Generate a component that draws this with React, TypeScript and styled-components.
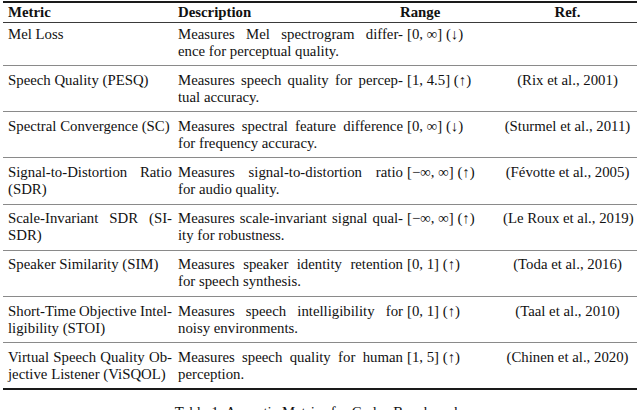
import React from "react";
import styled, { createGlobalStyle } from "styled-components";

const Global = createGlobalStyle`
  html, body { margin: 0; padding: 0; background: #ffffff; }
  body { font-family: "Liberation Serif", "Times New Roman", serif; color: #111111; }
`;

const Page = styled.div`
  width: 640px;
  height: 410px;
  overflow: hidden;
  padding-top: 1px;
  box-sizing: border-box;
`;

const Table = styled.div`
  margin: 0 3px;
  width: 634px;
  border-top: 2px solid #1a1a1a;
  border-bottom: 2px solid #1a1a1a;
  font-size: 14.8px;
  line-height: 17px;
`;

const HeaderRow = styled.div`
  display: grid;
  grid-template-columns: 170px 229px 96px 1fr;
  padding: 1px 5px;
  border-bottom: 1px solid #3a3a3a;
  font-weight: 700;
`;

const Row = styled.div<{ $first?: boolean; $last?: boolean }>`
  display: grid;
  grid-template-columns: 170px 229px 96px 1fr;
  padding: ${(p) => (p.$first ? "2.5px" : "5.6px")} 5px 5.6px 5px;
  border-bottom: ${(p) => (p.$last ? "none" : "1px solid #8a8a8a")};
`;

const Cell = styled.div<{ $pr?: number; $center?: boolean }>`
  padding-right: ${(p) => p.$pr ?? 0}px;
  text-align: ${(p) => (p.$center ? "center" : "left")};
  white-space: nowrap;
  min-width: 0;
`;

const JustLine = styled.div`
  display: flex;
  justify-content: space-between;
  column-gap: 2.5px;
  white-space: nowrap;
`;

const PlainLine = styled.div`
  white-space: nowrap;
`;

const RangeHead = styled.div`
  margin-left: -7px;
`;

const Caption = styled.div`
  margin-top: 14px;
  text-align: center;
  font-size: 14.8px;
  line-height: 17px;
`;

type RowData = {
  metric: string[];
  desc: string[];
  range: string;
  ref: string;
};

const rows: RowData[] = [
  {
    metric: ["Mel Loss"],
    desc: ["Measures Mel spectrogram differ-", "ence for perceptual quality."],
    range: "[0, ∞] (↓)",
    ref: "",
  },
  {
    metric: ["Speech Quality (PESQ)"],
    desc: ["Measures speech quality for percep-", "tual accuracy."],
    range: "[1, 4.5] (↑)",
    ref: "(Rix et al., 2001)",
  },
  {
    metric: ["Spectral Convergence (SC)"],
    desc: ["Measures spectral feature difference", "for frequency accuracy."],
    range: "[0, ∞] (↓)",
    ref: "(Sturmel et al., 2011)",
  },
  {
    metric: ["Signal-to-Distortion Ratio", "(SDR)"],
    desc: ["Measures signal-to-distortion ratio", "for audio quality."],
    range: "[−∞, ∞] (↑)",
    ref: "(Févotte et al., 2005)",
  },
  {
    metric: ["Scale-Invariant SDR (SI-", "SDR)"],
    desc: ["Measures scale-invariant signal qual-", "ity for robustness."],
    range: "[−∞, ∞] (↑)",
    ref: "(Le Roux et al., 2019)",
  },
  {
    metric: ["Speaker Similarity (SIM)"],
    desc: ["Measures speaker identity retention", "for speech synthesis."],
    range: "[0, 1] (↑)",
    ref: "(Toda et al., 2016)",
  },
  {
    metric: ["Short-Time Objective Intel-", "ligibility (STOI)"],
    desc: ["Measures speech intelligibility for", "noisy environments."],
    range: "[0, 1] (↑)",
    ref: "(Taal et al., 2010)",
  },
  {
    metric: ["Virtual Speech Quality Ob-", "jective Listener (ViSQOL)"],
    desc: ["Measures speech quality for human", "perception."],
    range: "[1, 5] (↑)",
    ref: "(Chinen et al., 2020)",
  },
];

const Lines: React.FC<{ lines: string[] }> = ({ lines }) => (
  <>
    {lines.map((l, i) =>
      i < lines.length - 1 ? (
        <JustLine key={i}>
          {l.split(" ").map((w, j) => (
            <span key={j}>{w}</span>
          ))}
        </JustLine>
      ) : (
        <PlainLine key={i}>{l}</PlainLine>
      )
    )}
  </>
);

export default function App() {
  return (
    <Page>
      <Global />
      <Table>
        <HeaderRow>
          <Cell $pr={6}>Metric</Cell>
          <Cell $pr={4}>Description</Cell>
          <Cell>
            <RangeHead>Range</RangeHead>
          </Cell>
          <Cell $center>Ref.</Cell>
        </HeaderRow>
        {rows.map((r, i) => (
          <Row key={i} $first={i === 0} $last={i === rows.length - 1}>
            <Cell $pr={6}>
              <Lines lines={r.metric} />
            </Cell>
            <Cell $pr={4}>
              <Lines lines={r.desc} />
            </Cell>
            <Cell>{r.range}</Cell>
            <Cell $center>{r.ref}</Cell>
          </Row>
        ))}
      </Table>
      <Caption>Table 1: Acoustic Metrics for Codec Benchmark.</Caption>
    </Page>
  );
}
